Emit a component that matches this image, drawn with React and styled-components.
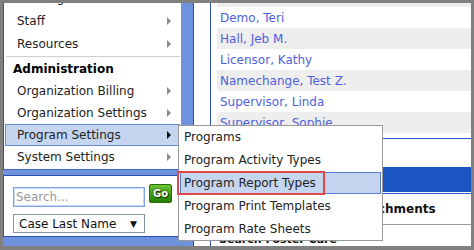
import React from "react";
import styled, { createGlobalStyle } from "styled-components";

const Global = createGlobalStyle`
  html, body { margin: 0; padding: 0; background: #808080; }
  #root { width: 474px; height: 250px; }
`;

const Frame = styled.div`
  box-sizing: border-box;
  width: 474px;
  height: 250px;
  padding: 3px 3px 4px 3px;
  background: #808080;
  font-family: "DejaVu Sans", Verdana, sans-serif;
  font-size: 12px;
  position: relative;
`;

const Inner = styled.div`
  display: flex;
  height: 100%;
  overflow: hidden;
  background: #fff;
`;

const Sidebar = styled.div`
  width: 191px;
  flex: none;
  box-sizing: border-box;
  background: #6f92dc;
  border-right: 1px solid #2a50b8;
  display: flex;
  flex-direction: column;
  gap: 5px;
  padding-right: 12px;
`;

const NavBox = styled.div`
  background: #fff;
  border-left: 1px solid #2a50b8;
  border-bottom: 1px solid #4a6cc8;
  padding: 0 1px 1px 1px;
  height: 167px;
  box-sizing: border-box;
  overflow: hidden;
`;

const NavList = styled.div`
  margin-top: -16px;
  display: flex;
  flex-direction: column;
`;

const NavItem = styled.div`
  height: ${(p) => p.$h || 22}px;
  box-sizing: border-box;
  display: flex;
  align-items: center;
  justify-content: space-between;
  padding: 0 8px 0 11px;
  color: #222;
  border: 1px solid ${(p) => (p.$active ? "#6a8ad2" : "transparent")};
  background: ${(p) => (p.$active ? "#c5d5f0" : "transparent")};
`;

const Arrow = styled.span`
  width: 0;
  height: 0;
  border-top: 4px solid transparent;
  border-bottom: 4px solid transparent;
  border-left: 4px solid ${(p) => (p.$active ? "#111" : "#8a8a8a")};
`;

const Separator = styled.div`
  height: 1px;
  background: #cfcfcf;
  margin: 1px 0 0 1px;
`;

const SectionHeader = styled.div`
  height: 23px;
  display: flex;
  align-items: center;
  padding-left: 8px;
  font-weight: bold;
  font-size: 12px;
  color: #000;
`;

const SearchBox = styled.div`
  background: #fff;
  border: 1px solid #2a50b8;
  border-right: none;
  height: 62px;
  box-sizing: border-box;
  padding: 8px 0 0 9px;
  display: grid;
  grid-template-columns: 132px 23px;
  column-gap: 4px;
  row-gap: 4px;
  align-items: start;
`;

const SearchInput = styled.input`
  box-sizing: border-box;
  width: 132px;
  height: 20px;
  margin: 3px 0 0 0;
  border: 1px solid #7fa3e6;
  box-shadow: inset 0 0 0 1px #c8d8f6;
  padding: 0 2px;
  font-family: "DejaVu Sans", Verdana, sans-serif;
  font-size: 12px;
  color: #333;
  outline: none;
  &::placeholder { color: #9a9a9a; }
`;

const GoButton = styled.button`
  box-sizing: border-box;
  width: 23px;
  height: 19px;
  padding: 0;
  border: 1px solid #2a6a08;
  border-radius: 2px;
  background: linear-gradient(#6cc83a, #3a9a12 55%, #2a7e06);
  color: #fff;
  font-family: "DejaVu Sans", Verdana, sans-serif;
  font-weight: bold;
  font-size: 10px;
  text-shadow: 0 0 2px #163e00, 1px 1px 0 #163e00;
`;

const Select = styled.div`
  box-sizing: border-box;
  width: 132px;
  height: 19px;
  border: 1px solid #8394aa;
  display: flex;
  align-items: center;
  justify-content: space-between;
  padding: 0 7px 0 5px;
  color: #111;
  font-size: 12px;
`;

const Caret = styled.span`
  font-size: 9px;
  color: #111;
`;

const Gutter = styled.div`
  width: 16px;
  flex: none;
  background: #fff;
  border-right: 1px solid #2a50b8;
`;

const Content = styled.div`
  flex: 1;
  min-width: 0;
  padding-left: 6px;
  display: flex;
  flex-direction: column;
`;

const Rows = styled.div`
  margin-top: -17px;
  display: flex;
  flex-direction: column;
`;

const Row = styled.div`
  height: 21px;
  display: flex;
  align-items: center;
  padding-left: 3px;
  background: ${(p) => (p.$odd ? "#eeeeee" : "#fff")};
  color: #4f5fdc;
  white-space: nowrap;
`;

const BlueRule = styled.div`
  height: 1px;
  background: #2a5bc8;
  margin-top: ${(p) => p.$mt || 0}px;
`;

const Bar = styled.div`
  height: 26px;
  margin-top: 28px;
  background: #1a55c2;
  margin-bottom: 1px;
`;

const HeaderRow = styled.div`
  height: 32px;
  display: flex;
  align-items: center;
  padding-left: 132px;
  font-weight: bold;
  font-size: 12px;
  color: #111;
  border-bottom: 1px solid #9a9a9a;
`;

const SubHeading = styled.div`
  padding: 8px 0 0 2px;
  font-weight: bold;
  font-size: 11px;
  color: #111;
`;

const Menu = styled.div`
  position: absolute;
  left: 178px;
  top: 125px;
  width: 205px;
  box-sizing: border-box;
  background: #fff;
  border: 1px solid #999;
  padding: 0 1px;
  display: flex;
  flex-direction: column;
  gap: 1px;
  color: #222;
`;

const MenuItem = styled.div`
  position: relative;
  height: 22px;
  box-sizing: border-box;
  display: flex;
  align-items: center;
  padding-left: 3px;
  border: 1px solid ${(p) => (p.$active ? "#5a7cd0" : "transparent")};
  background: ${(p) => (p.$active ? "#c5d5f0" : "transparent")};
  white-space: nowrap;
`;

const Callout = styled.span`
  position: absolute;
  left: -4px;
  top: -2px;
  width: 148px;
  height: 24px;
  box-sizing: border-box;
  border: 2px solid #e04848;
  pointer-events: none;
`;

const navTop = [
  { label: "Training", arrow: true, h: 22 },
  { label: "Staff", arrow: true, h: 23 },
  { label: "Resources", arrow: true, h: 23 },
];

const navAdmin = [
  { label: "Organization Billing", arrow: true },
  { label: "Organization Settings", arrow: true },
  { label: "Program Settings", arrow: true, active: true },
  { label: "System Settings", arrow: true },
];

const people = [
  "Adams, Pat",
  "Demo, Teri",
  "Hall, Jeb M.",
  "Licensor, Kathy",
  "Namechange, Test Z.",
  "Supervisor, Linda",
  "Supervisor, Sophie",
];

const menuItems = [
  "Programs",
  "Program Activity Types",
  "Program Report Types",
  "Program Print Templates",
  "Program Rate Sheets",
];

export default function App() {
  return (
    <>
      <Global />
      <Frame>
        <Inner>
          <Sidebar>
            <NavBox>
              <NavList>
                {navTop.map((n) => (
                  <NavItem key={n.label} $h={n.h}>
                    <span>{n.label}</span>
                    {n.arrow && <Arrow />}
                  </NavItem>
                ))}
                <Separator />
                <SectionHeader>Administration</SectionHeader>
                {navAdmin.map((n) => (
                  <NavItem key={n.label} $active={n.active}>
                    <span>{n.label}</span>
                    <Arrow $active={n.active} />
                  </NavItem>
                ))}
              </NavList>
            </NavBox>
            <SearchBox>
              <SearchInput placeholder="Search..." />
              <GoButton>Go</GoButton>
              <Select>
                <span>Case Last Name</span>
                <Caret>▼</Caret>
              </Select>
            </SearchBox>
          </Sidebar>
          <Gutter />
          <Content>
            <Rows>
              {people.map((p, i) => (
                <Row key={p} $odd={i % 2 === 0}>
                  {p}
                </Row>
              ))}
            </Rows>
            <BlueRule $mt={5} />
            <Bar />
            <BlueRule />
            <HeaderRow>Attachments</HeaderRow>
            <SubHeading>Search Foster Care</SubHeading>
          </Content>
        </Inner>
        <Menu>
          {menuItems.map((m) => (
            <MenuItem key={m} $active={m === "Program Report Types"}>
              {m}
              {m === "Program Report Types" && <Callout />}
            </MenuItem>
          ))}
        </Menu>
      </Frame>
    </>
  );
}
